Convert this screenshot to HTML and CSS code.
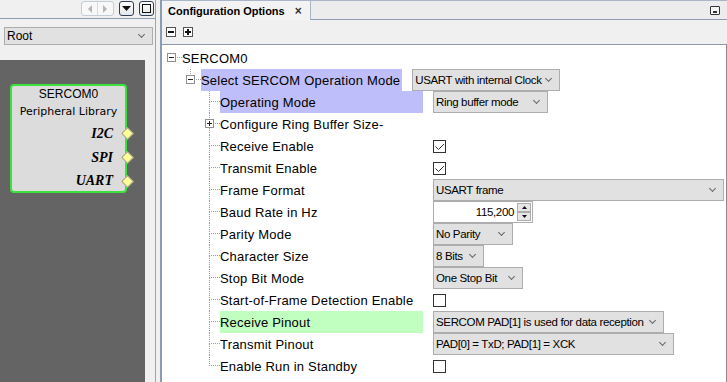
FILE: index.html
```html
<!DOCTYPE html>
<html lang="en">
<head>
    <meta charset="UTF-8">
    <title>Configuration Options</title>
    <link rel="stylesheet" href="styles.css">
</head>
<body>
<div class="app">
    <!-- project graph -->
    <aside class="graph">
        <div class="graph-bar">
            <span class="nav-pair">
                <span class="nav-btn"><svg width="5" height="8"><polygon points="5,0 5,8 1,4" fill="#b5b5b5"/></svg></span>
                <span class="nav-btn"><svg width="5" height="8"><polygon points="0,0 0,8 4,4" fill="#b5b5b5"/></svg></span>
            </span>
            <span class="win-btn"><svg width="9" height="5"><polygon points="0,0 9,0 4.5,5" fill="#111"/></svg></span>
            <span class="win-btn"><svg width="9" height="9"><rect x="0.5" y="0.5" width="8" height="8" fill="none" stroke="#111"/></svg></span>
        </div>
        <div class="combo root-combo"><span>Root</span></div>
        <div class="canvas">
            <div class="node">
                <div class="node-title">SERCOM0</div>
                <div class="node-sub">Peripheral Library</div>
                <div class="port"><span>I2C</span><i class="pin"></i></div>
                <div class="port"><span>SPI</span><i class="pin"></i></div>
                <div class="port"><span>UART</span><i class="pin"></i></div>
            </div>
        </div>
    </aside>

    <!-- configuration tree -->
    <section class="config">
        <div class="tabbar">
            <div class="tab">Configuration Options <span class="tab-close">×</span></div>
            <span class="minimize"></span>
        </div>
        <div class="toolbar">
            <span class="toggle-btn minus"></span>
            <span class="toggle-btn plus"></span>
        </div>
        <div class="tree">
            <div class="row">
                <span class="elbow root"><span class="lines"></span><span class="toggle minus"></span></span>
                <span class="label">SERCOM0</span>
            </div>
            <div class="row">
                <span class="indent"></span>
                <span class="elbow last"><span class="lines"></span><span class="toggle minus"></span></span>
                <span class="label group hl-blue">Select SERCOM Operation Mode</span>
                <span class="combo c-mode"><span>USART with internal Clock</span></span>
            </div>
            <div class="row">
                <span class="indent"></span><span class="indent"></span>
                <span class="elbow"><span class="lines"></span></span>
                <span class="label field hl-blue">Operating Mode</span>
                <span class="combo c-ring"><span>Ring buffer mode</span></span>
            </div>
            <div class="row">
                <span class="indent"></span><span class="indent"></span>
                <span class="elbow"><span class="lines"></span><span class="toggle plus"></span></span>
                <span class="label field">Configure Ring Buffer Size-</span>
            </div>
            <div class="row">
                <span class="indent"></span><span class="indent"></span>
                <span class="elbow"><span class="lines"></span></span>
                <span class="label field">Receive Enable</span>
                <span class="check"><svg width="11" height="11"><polyline points="1.5,5.5 4.5,8.5 10,3" fill="none" stroke="#333"/></svg></span>
            </div>
            <div class="row">
                <span class="indent"></span><span class="indent"></span>
                <span class="elbow"><span class="lines"></span></span>
                <span class="label field">Transmit Enable</span>
                <span class="check"><svg width="11" height="11"><polyline points="1.5,5.5 4.5,8.5 10,3" fill="none" stroke="#333"/></svg></span>
            </div>
            <div class="row">
                <span class="indent"></span><span class="indent"></span>
                <span class="elbow"><span class="lines"></span></span>
                <span class="label field">Frame Format</span>
                <span class="combo c-frame"><span>USART frame</span></span>
            </div>
            <div class="row">
                <span class="indent"></span><span class="indent"></span>
                <span class="elbow"><span class="lines"></span></span>
                <span class="label field">Baud Rate in Hz</span>
                <span class="spin">
                    <span class="spin-val">115,200</span>
                    <span class="spin-btns">
                        <span class="spin-btn"><svg width="5" height="3"><polygon points="0,3 5,3 2.5,0" fill="#111"/></svg></span>
                        <span class="spin-btn"><svg width="5" height="3"><polygon points="0,0 5,0 2.5,3" fill="#111"/></svg></span>
                    </span>
                </span>
            </div>
            <div class="row">
                <span class="indent"></span><span class="indent"></span>
                <span class="elbow"><span class="lines"></span></span>
                <span class="label field">Parity Mode</span>
                <span class="combo c-parity"><span>No Parity</span></span>
            </div>
            <div class="row">
                <span class="indent"></span><span class="indent"></span>
                <span class="elbow"><span class="lines"></span></span>
                <span class="label field">Character Size</span>
                <span class="combo c-bits"><span>8 Bits</span></span>
            </div>
            <div class="row">
                <span class="indent"></span><span class="indent"></span>
                <span class="elbow"><span class="lines"></span></span>
                <span class="label field">Stop Bit Mode</span>
                <span class="combo c-stop"><span>One Stop Bit</span></span>
            </div>
            <div class="row">
                <span class="indent"></span><span class="indent"></span>
                <span class="elbow"><span class="lines"></span></span>
                <span class="label field">Start-of-Frame Detection Enable</span>
                <span class="check"></span>
            </div>
            <div class="row">
                <span class="indent"></span><span class="indent"></span>
                <span class="elbow"><span class="lines"></span></span>
                <span class="label field hl-green">Receive Pinout</span>
                <span class="combo c-rx"><span>SERCOM PAD[1] is used for data reception</span></span>
            </div>
            <div class="row">
                <span class="indent"></span><span class="indent"></span>
                <span class="elbow"><span class="lines"></span></span>
                <span class="label field">Transmit Pinout</span>
                <span class="combo c-tx"><span>PAD[0] = TxD; PAD[1] = XCK</span></span>
            </div>
            <div class="row">
                <span class="indent"></span><span class="indent"></span>
                <span class="elbow last"><span class="lines"></span></span>
                <span class="label field">Enable Run in Standby</span>
                <span class="check"></span>
            </div>
        </div>
    </section>
</div>
</body>
</html>
```

FILE: styles.css
```css
/* MCC-like configuration window */
body {
    margin: 0;
    background: #f0f0f0;
    font-family: "Liberation Sans", Arial, sans-serif;
    color: #000;
    overflow: hidden;
}
.app {
    display: flex;
    height: 382px;
}

/* ---- left: project graph ---- */
.graph {
    width: 156px;
    flex-shrink: 0;
    box-sizing: border-box;
    border-right: 1px solid #9aa6b8;
    display: flex;
    flex-direction: column;
}
.graph-bar {
    height: 19px;
    box-sizing: border-box;
    border-bottom: 1px solid #8b9bb4;
    display: flex;
    justify-content: flex-end;
    align-items: flex-start;
    gap: 5px;
    padding: 1px 1px 0 0;
}
.nav-pair {
    display: flex;
    border: 1px solid #c5ccd7;
    border-radius: 3px;
    background: #f8f8f8;
}
.nav-btn {
    width: 15px;
    height: 13px;
    display: flex;
    align-items: center;
    justify-content: center;
}
.nav-btn + .nav-btn {
    border-left: 1px solid #d6dbe2;
}
.win-btn {
    width: 15px;
    height: 15px;
    box-sizing: border-box;
    border: 1px solid #2f3d57;
    border-radius: 3px;
    background: linear-gradient(#ffffff, #e4e7ec);
    display: flex;
    align-items: center;
    justify-content: center;
}
.canvas {
    flex: 1;
    margin: 15px 10px 0 0;
    padding: 24px 0 0 10px;
    background: #646464;
}
.node {
    width: 117px;
    height: 109px;
    box-sizing: border-box;
    border: 2px solid #3ce23c;
    border-radius: 4px;
    background: #dcdcdc;
    display: flex;
    flex-direction: column;
    align-items: center;
    gap: 4px;
}
.node-title {
    font-size: 12px;
    line-height: 16px;
}
.node-sub {
    font-family: "DejaVu Sans", sans-serif;
    font-size: 11px;
    line-height: 16px;
    margin-top: -2px;
}
.port {
    align-self: stretch;
    height: 20px;
    margin-right: -7px;
    display: flex;
    justify-content: flex-end;
    align-items: center;
    gap: 10px;
    font-family: "Liberation Serif", serif;
    font-weight: bold;
    font-style: italic;
    font-size: 14px;
}
.pin {
    width: 9px;
    height: 9px;
    box-sizing: border-box;
    border: 1px solid #a0a080;
    background: #ffff9c;
    transform: rotate(45deg);
}

/* ---- right: configuration options ---- */
.config {
    flex: 1;
    margin-left: 4px;
    border-left: 2px solid #8b9bb4;
    display: flex;
    flex-direction: column;
}
.tabbar {
    height: 20px;
    box-sizing: border-box;
    border-top: 1px solid #a9b6c8;
    border-bottom: 1px solid #8b9bb4;
    background: #ececec;
    display: flex;
    justify-content: space-between;
}
.tab {
    margin-bottom: -1px;
    padding: 0 8px 0 6px;
    background: #f3f3f3;
    border-right: 1px solid #a9b6c8;
    display: flex;
    align-items: center;
    gap: 10px;
    font-size: 11px;
    font-weight: bold;
}
.tab-close {
    font-size: 12px;
    color: #333;
}
.minimize {
    align-self: center;
    margin-right: 7px;
    width: 10px;
    height: 9px;
    box-sizing: border-box;
    border: 1px solid #333;
    border-radius: 1px;
    background: linear-gradient(#333, #333) 2px 4px / 4px 2px no-repeat, #f7f7f7;
}
.toolbar {
    height: 25px;
    box-sizing: border-box;
    border-bottom: 1px solid #8b9bb4;
    display: flex;
    align-items: center;
    gap: 7px;
    padding-left: 4px;
}
.toggle-btn {
    width: 10px;
    height: 10px;
    box-sizing: border-box;
    border: 1px solid #555;
    background: linear-gradient(#111, #111) center / 6px 2px no-repeat, #fff;
}
.toggle-btn.plus {
    background: linear-gradient(#111, #111) center / 6px 2px no-repeat,
                linear-gradient(#111, #111) center / 2px 6px no-repeat, #fff;
}

.tree {
    flex: 1;
    background: #fff;
    border-right: 1px solid #8a8a8a;
    padding: 2px 0 0 1px;
}
.row {
    display: flex;
    height: 22px;
    font-size: 13px;
    letter-spacing: 0.2px;
}
.indent {
    width: 19px;
    flex-shrink: 0;
}
.elbow {
    width: 19px;
    flex-shrink: 0;
    display: grid;
}
.elbow > * {
    grid-area: 1 / 1;
}
.lines {
    display: flex;
    flex-direction: column;
}
.lines::before {
    content: "";
    height: 11px;
    box-sizing: border-box;
    margin-left: 8px;
    border-left: 1px dotted #9c9c9c;
    border-bottom: 1px dotted #9c9c9c;
}
.lines::after {
    content: "";
    flex: 1;
    margin-left: 8px;
    border-left: 1px dotted #9c9c9c;
}
.elbow.last .lines::after,
.elbow.root .lines::after {
    border-left: 0;
}
.elbow.root .lines::before {
    border-left: 0;
}
.toggle {
    align-self: center;
    justify-self: start;
    margin: 0 0 1px 4px;
    width: 9px;
    height: 9px;
    box-sizing: border-box;
    border: 1px solid #8f8f8f;
    background: linear-gradient(#222, #222) center / 5px 1px no-repeat, #fff;
}
.toggle.plus {
    background: linear-gradient(#222, #222) center / 5px 1px no-repeat,
                linear-gradient(#222, #222) center / 1px 5px no-repeat, #fff;
}
.label {
    display: flex;
    align-items: center;
    white-space: nowrap;
    flex-shrink: 0;
}
.label.group {
    padding-right: 2px;
}
.label.field {
    width: 203px;
    overflow: hidden;
}
.hl-blue {
    background: #bebefa;
}
.hl-green {
    background: #c0ffc0;
}

/* ---- controls ---- */
.combo {
    height: 22px;
    box-sizing: border-box;
    flex-shrink: 0;
    border: 1px solid #adadad;
    background: #e1e1e1;
    display: flex;
    align-items: center;
    justify-content: space-between;
    padding: 0 8px 0 2px;
    font-size: 11.5px;
    letter-spacing: -0.35px;
    white-space: nowrap;
}
.combo::after {
    content: "";
    width: 4px;
    height: 4px;
    border-right: 1px solid #666;
    border-bottom: 1px solid #666;
    transform: rotate(45deg);
    margin-top: -3px;
}
.combo.root-combo {
    margin: 8px 2px 0 4px;
    height: 18px;
    font-size: 12px;
    letter-spacing: 0;
}
.row .combo,
.row .check,
.row .spin {
    margin-left: 10px;
}
.c-mode { width: 148px; }
.c-ring { width: 115px; }
.c-frame { width: 291px; }
.c-parity { width: 80px; }
.c-bits { width: 51px; }
.c-stop { width: 90px; }
.c-rx { width: 231px; }
.c-tx { width: 241px; }

.check {
    align-self: center;
    width: 13px;
    height: 13px;
    box-sizing: border-box;
    border: 1px solid #333;
    background: #fff;
    display: flex;
}
.spin {
    width: 100px;
    height: 22px;
    box-sizing: border-box;
    border: 1px solid #adadad;
    background: #fff;
    display: flex;
    align-items: center;
    padding-right: 1px;
    font-size: 11.5px;
    letter-spacing: -0.35px;
}
.spin-val {
    flex: 1;
    text-align: right;
    padding-right: 3px;
}
.spin-btns {
    display: flex;
    flex-direction: column;
}
.spin-btn {
    width: 14px;
    height: 9px;
    box-sizing: border-box;
    border: 1px solid #adadad;
    background: #e6e6e6;
    display: flex;
    align-items: center;
    justify-content: center;
}
```
